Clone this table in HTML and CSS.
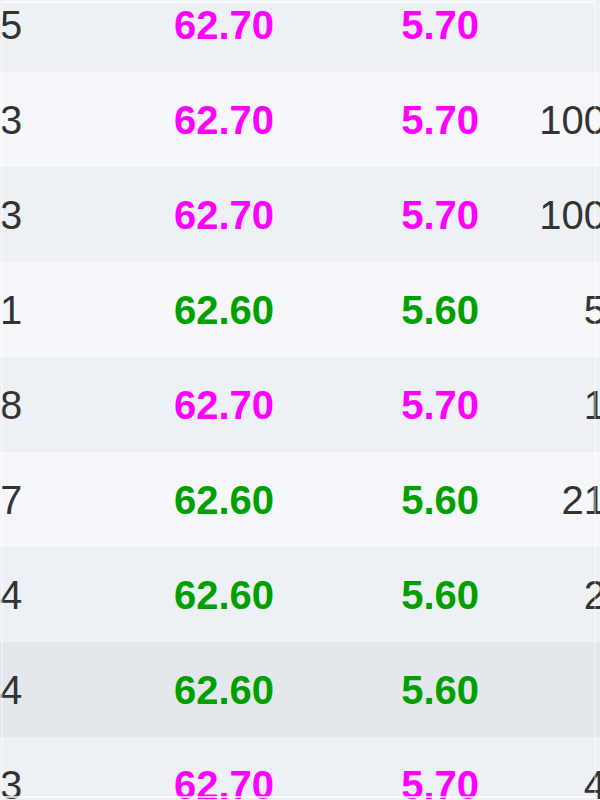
FILE: index.html
```html
<!DOCTYPE html>
<html lang="en">
<head>
    <meta charset="UTF-8">
    <meta name="viewport" content="width=device-width, initial-scale=1.0">
    <title>Quotes</title>
    <link rel="stylesheet" href="styles.css">
</head>
<body>
    <div class="sheet">
        <table class="quotes">
            <colgroup>
                <col class="c-vol">
                <col class="c-price">
                <col class="c-chg">
                <col class="c-qty">
            </colgroup>
            <tbody>
                <tr><td>5</td><td class="up">62.70</td><td class="up">5.70</td><td></td></tr>
                <tr><td>3</td><td class="up">62.70</td><td class="up">5.70</td><td>100</td></tr>
                <tr><td>3</td><td class="up">62.70</td><td class="up">5.70</td><td>100</td></tr>
                <tr><td>1</td><td class="down">62.60</td><td class="down">5.60</td><td>5</td></tr>
                <tr><td>8</td><td class="up">62.70</td><td class="up">5.70</td><td>1</td></tr>
                <tr><td>7</td><td class="down">62.60</td><td class="down">5.60</td><td>21</td></tr>
                <tr><td>4</td><td class="down">62.60</td><td class="down">5.60</td><td>2</td></tr>
                <tr class="hover"><td>4</td><td class="down">62.60</td><td class="down">5.60</td><td></td></tr>
                <tr><td>3</td><td class="up">62.70</td><td class="up">5.70</td><td>4</td></tr>
            </tbody>
        </table>
    </div>
</body>
</html>
```

FILE: styles.css
```css
html, body {
    margin: 0;
    overflow: hidden;
    background: #edf1f5;
}
.sheet {
    position: relative;
    width: 600px;
    height: 800px;
    overflow: hidden;
}
/* light frame round the visible area */
.sheet::after {
    content: "";
    position: absolute;
    top: 1px;
    left: 1px;
    width: 595px;
    height: 797px;
    box-sizing: border-box;
    border: 2px solid rgba(255, 255, 255, 0.75);
    border-left-color: rgba(255, 255, 255, 0.35);
    border-right-color: rgba(255, 255, 255, 0.35);
    pointer-events: none;
}
.quotes {
    table-layout: fixed;
    width: 618px;
    margin-top: -23px;
    border-collapse: collapse;
    font-family: "Liberation Sans", Arial, sans-serif;
    font-size: 40px;
    color: #333;
}
.c-vol { width: 32px; }
.c-price { width: 254px; }
.c-chg { width: 205px; }
.c-qty { width: 127px; }
.quotes td {
    height: 95px;
    padding: 0 12px 0 0;
    text-align: right;
    white-space: nowrap;
    overflow: hidden;
    line-height: 1;
}
.quotes tr:nth-child(odd) { background: #edf1f5; }
.quotes tr:nth-child(even) { background: #f5f7fa; }
.quotes tr.hover { background: #e4e8ec; }
.up { color: #f0f; font-weight: bold; }
.down { color: #00a000; font-weight: bold; }
```
